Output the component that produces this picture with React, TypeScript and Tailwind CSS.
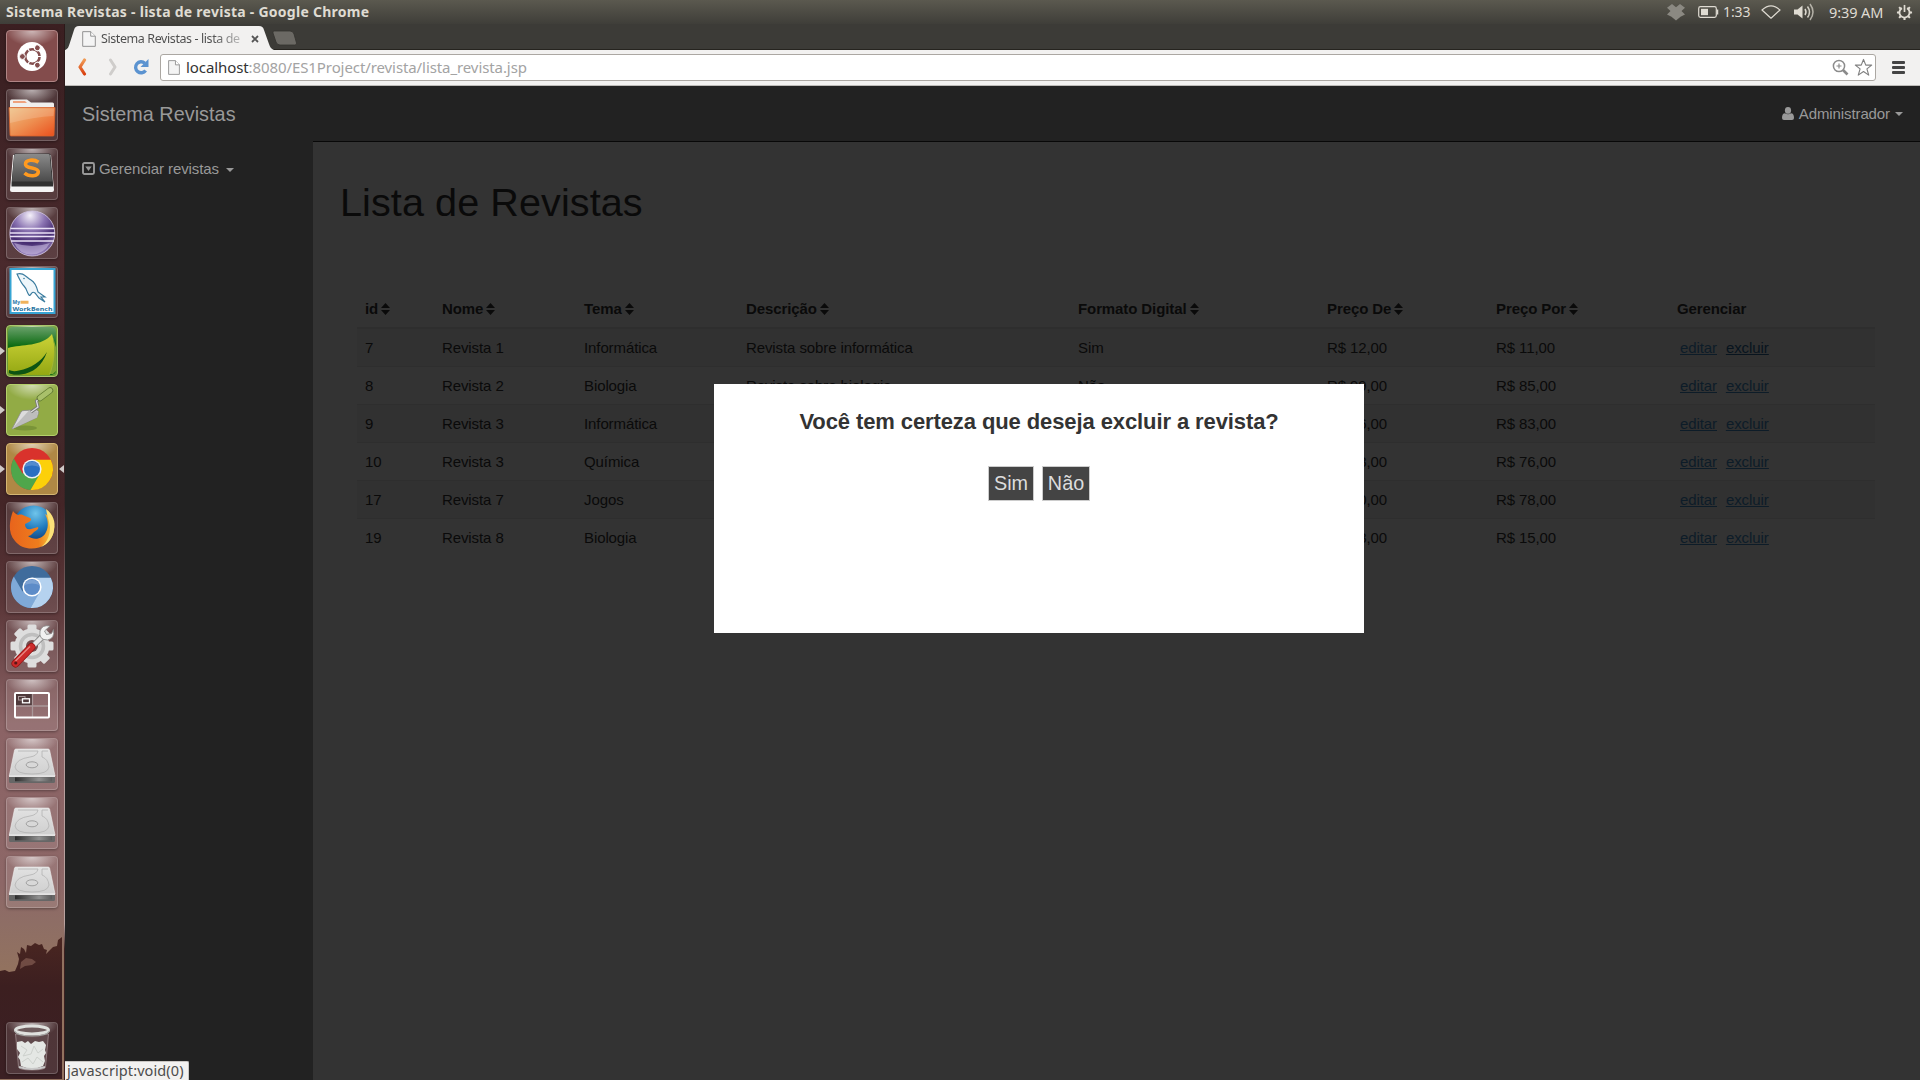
import React from "react";

const ui = "font-['Noto_Sans','Open_Sans',sans-serif]";

function Tile({ children, tone = "glass", left, right }: { children: React.ReactNode; tone?: string; left?: boolean; right?: boolean }) {
  const tones: Record<string, string> = {
    glass: "border-white/20 bg-white/10",
    ubuntu: "border-[#b08585] bg-[#834c4c]",
    leaf: "border-[#a9c76c] bg-[#6d9a35]",
    olive: "border-[#b4d06a] bg-[#92ab45]",
    gold: "border-[#d5b673] bg-[#af8845]",
  };
  return (
    <div className="flex h-[52px] w-full shrink-0 items-center">
      <div className="flex w-[6px] shrink-0">
        {left && <div className="h-0 w-0 border-y-4 border-l-[5px] border-y-transparent border-l-[#cfc9c8]" />}
      </div>
      <div className={"relative h-[52px] w-[52px] shrink-0 overflow-hidden rounded-[4px] border shadow-[0_1px_3px_rgba(0,0,0,0.35)] " + tones[tone]}>
        <div className="absolute inset-0 bg-[radial-gradient(ellipse_26px_15px_at_50%_0%,rgba(255,255,255,0.6),rgba(255,255,255,0))]" />
        <svg viewBox="0 0 52 52" className="absolute -left-px -top-px h-[52px] w-[52px]">
          {children}
        </svg>
      </div>
      <div className="flex w-[6px] shrink-0 justify-end">
        {right && <div className="h-0 w-0 border-y-4 border-r-[5px] border-y-transparent border-r-[#cfc9c8]" />}
      </div>
    </div>
  );
}

const Ubuntu = () => (
  <g>
    <circle cx="26" cy="26.5" r="14.5" fill="#fff" />
    <circle cx="26.4" cy="26.5" r="7.2" fill="none" stroke="#844e4e" strokeWidth="2.6" />
    {[60, 180, 300].map((a) => (
      <g key={a} transform={`rotate(${a} 26.4 26.5)`}>
        <circle cx="36.4" cy="26.5" r="2.9" fill="#844e4e" stroke="#fff" strokeWidth="1" />
      </g>
    ))}
    {[0, 120, 240].map((a) => (
      <path key={a} d="M32 26.5h4" stroke="#fff" strokeWidth="1.2" transform={`rotate(${a} 26.4 26.5)`} />
    ))}
  </g>
);

const Folder = () => (
  <g>
    <defs>
      <linearGradient id="fo" x1="0" y1="0" x2="1" y2="1">
        <stop offset="0" stopColor="#eec083" /><stop offset=".5" stopColor="#ee8e50" /><stop offset="1" stopColor="#ea4f1c" />
      </linearGradient>
    </defs>
    <path d="M4 19V12q0-1.500 1.500-1.500H21l4 3h21.500q1.500 0 1.500 1.500v4z" fill="#f0efed" />
    <path d="M7 12h12l2 2H7z" fill="#efa27d" />
    <path d="M3 18.500h46l-1 27.500q0 1-1 1H5q-1 0-1-1z" fill="url(#fo)" stroke="#d9632c" strokeWidth=".8" />
    <path d="M4 19.500h44L47.500 27Q28 28 4 34z" fill="#fff" opacity=".16" />
  </g>
);

const Sublime = () => (
  <g>
    <defs><linearGradient id="su" x1="0" y1="0" x2="0" y2="1"><stop offset="0" stopColor="#8a8a8a" /><stop offset="1" stopColor="#4b4b4b" /></linearGradient></defs>
    <path d="M7 7h38l3 35q0 2-2 2H6q-2 0-2-2z" fill="#f4f4f4" />
    <path d="M9 5.500h34q1.500 0 1.500 1.500L47 35v3.500H5.500V35L8 7q0-1.500 1-1.500z" fill="#303030" />
    <path d="M9.500 6h33q1 0 1.200 1L46 33.500H6L8.300 7q.2-1 1.200-1z" fill="url(#su)" />
    <path d="M32.500 14.200C28 11 19.500 11.500 19.500 16.200c0 5 12.800 2.800 12.800 7.600 0 5-9.500 5-13.800 1.200" fill="none" stroke="#ff9a1f" strokeWidth="3.600" />
  </g>
);

const Eclipse = () => (
  <g>
    <defs><radialGradient id="ec" cx=".45" cy=".1" r=".95"><stop offset="0" stopColor="#f5f1fa" /><stop offset=".35" stopColor="#8b74b2" /><stop offset=".65" stopColor="#452b70" /><stop offset="1" stopColor="#a894cc" /></radialGradient></defs>
    <circle cx="26.300" cy="26.500" r="22.500" fill="url(#ec)" stroke="#d3c8e4" strokeWidth=".8" />
    <path d="M4.500 21.500h44M4 26h45M4 29.500h45M5 34h43" stroke="#e9e1f5" strokeWidth="1.400" />
    <path d="M8 36q18 6 36 0q-6 11-18 11.500T8 36z" fill="#cfc2e6" opacity=".55" />
  </g>
);

const Workbench = () => (
  <g>
    <rect x="4.500" y="3" width="44" height="44" fill="#fff" stroke="#37a5d4" strokeWidth="2" />
    <path d="M11 8c6-2 9 3 14 6 5 3 6 8 7 12l7 5-4 0 4 5-6-4-4-5c-4-3-4 4-6 2s-2-6-5-9-5-8-7-12z" fill="#eef6fa" stroke="#3b7c9f" strokeWidth="1.200" />
    <circle cx="18" cy="12.500" r=".8" fill="#3b7c9f" />
    <g fontWeight="bold" fontFamily="Noto Sans">
      <text x="6.500" y="38" fontSize="5" fill="#2676a8">My</text>
      <path d="M14.500 36.300h8" stroke="#f0b35c" strokeWidth="3" />
      <text x="6.500" y="45" fontSize="5.500" textLength="40" lengthAdjust="spacingAndGlyphs" fill="#1c719e">WorkBench</text>
    </g>
  </g>
);

const Leaf = () => (
  <g>
    <defs>
      <linearGradient id="le" x1="0" y1="0" x2="0" y2="1"><stop offset="0" stopColor="#68a069" /><stop offset=".4" stopColor="#0c6b12" /></linearGradient>
      <linearGradient id="lf" x1="0" y1="0" x2="0" y2="1"><stop offset="0" stopColor="#cdd338" /><stop offset="1" stopColor="#93a712" /></linearGradient>
    </defs>
    <rect x="2" y="2" width="48" height="48" rx="5" fill="url(#le)" />
    <path d="M2 23c14-4 34-1 44-14 4 13 3 29-2 41H7c-3 0-5-2-5-5z" fill="url(#lf)" />
    <path d="M3 45q4 2 10 .5C25 43 35 37 41 27c-5 14-14 21-26 22.500Q6 50.500 3 48z" fill="#0d5413" />
    <path d="M46 9c4 14 2 28-3 40h4l3-3V22z" fill="#a2b43a" opacity=".8" />
  </g>
);

const Trowel = () => (
  <g>
    <ellipse cx="19" cy="44" rx="12" ry="2.500" fill="#4d6920" opacity=".35" />
    <path d="M6 45l9-17q1-1.500 3-1.500l13-.5q2 1 1.500 3L31 33.500z" fill="#dcdcdc" stroke="#8b8b8b" strokeWidth=".8" />
    <path d="M6 45l17-18.500 9 1L31 33.500z" fill="#bdbdbd" />
    <path d="M25 28l7-5-1.500-6 5-4" fill="none" stroke="#777" strokeWidth="3" />
    <path d="M25 28l7-5-1.500-6 5-4" fill="none" stroke="#dcdcdc" strokeWidth="1.300" />
    <path d="M34 14L44 6.500" stroke="#627b31" strokeWidth="6.500" strokeLinecap="round" />
    <path d="M34 14L44 6.500" stroke="#a9c06a" strokeWidth="4.800" strokeLinecap="round" />
  </g>
);

const Chrome = ({ c }: { c: string[] }) => (
  <g>
    <circle cx="26" cy="26" r="21" fill={c[0]} />
    <path d="M7.800 15.500A21 21 0 0 0 24.500 47L34 32 26 26 16.500 30.500z" fill={c[1]} />
    <path d="M24.500 47A21 21 0 0 0 44.800 16.800H26L35 29z" fill={c[2]} />
    <circle cx="26" cy="26" r="9.600" fill={c[4]} />
    <circle cx="26" cy="26" r="8" fill={c[3]} />
    <path d="M18.500 24a8 8 0 0 1 15 0q-7.500-3-15 0z" fill="#fff" opacity=".2" />
  </g>
);

const Firefox = () => (
  <g>
    <defs>
      <radialGradient id="fb" cx=".55" cy=".2" r=".8"><stop offset="0" stopColor="#6fc4ea" /><stop offset=".5" stopColor="#1e79bd" /><stop offset="1" stopColor="#0d2c62" /></radialGradient>
      <linearGradient id="fx" x1="0" y1="0" x2="1" y2="0"><stop offset="0" stopColor="#e8641c" /><stop offset=".65" stopColor="#ee7d1d" /><stop offset="1" stopColor="#f9d443" /></linearGradient>
    </defs>
    <circle cx="27.500" cy="23.500" r="20" fill="url(#fb)" />
    <path d="M7 9c1 1 2 3 5 4 3-1 5 0 7 1l5 2c2 1 1 3-1 4l-4 2c0 4 2 6 6 5l7-2c1 2-1 3-4 5-3 3-4 4-6 4 6 5 15 3 18-4 3-5 2-13-1-18 6 3 7 4 8 6 3 9 0 18-7 24-10 7-24 6-31-3C1 30 4 17 7 9z" fill="url(#fx)" />
    <path d="M40 7c7 5 10 13 8 21-1 8-6 14-13 17 7-5 9-13 9-20-1-7-3-11-4-18z" fill="#fbe27a" />
  </g>
);

const Tools = () => (
  <g>
    {[0, 45, 90, 135].map((a) => (
      <rect key={a} x="21.500" y="4.500" width="9" height="43" rx="1.500" fill="#dedede" transform={`rotate(${a} 26 26)`} />
    ))}
    <circle cx="26" cy="26" r="17.500" fill="#dedede" />
    <circle cx="26" cy="26" r="11.500" fill="none" stroke="#bfbfbf" strokeWidth="3.500" />
    <circle cx="26" cy="26" r="6" fill="#734d4f" />
    <path d="M25 28l12-12" stroke="#7b7b7b" strokeWidth="6" />
    <path d="M25 28l12-12" stroke="#e7e7e7" strokeWidth="4.500" />
    <path d="M44 6l-5.500 5 2 3.500 5-1 2-4q1.500 9-6 10.500-9 0-7.500-9Q36 4.500 44 6z" fill="#f1f1f1" stroke="#858585" strokeWidth=".8" />
    <path d="M9.500 43.500L25.500 27" stroke="#8e1212" strokeWidth="8" strokeLinecap="round" />
    <path d="M9.500 43.500L25.500 27" stroke="#cc2b2b" strokeWidth="6.500" strokeLinecap="round" />
    <path d="M9.500 41L24 26.500" stroke="#e98a85" strokeWidth="1.200" />
    <circle cx="9.800" cy="43" r="1.600" fill="#5b1515" />
  </g>
);

const Workspaces = () => (
  <g fill="none">
    <rect x="9" y="14.500" width="17" height="12" fill="#4f3a3b" />
    <path d="M9 27h34M26.500 15v24" stroke="#a99899" strokeWidth="1.300" />
    <rect x="9" y="14" width="34" height="24.500" rx="1" stroke="#fff" strokeWidth="2" />
    <rect x="12.500" y="17.500" width="6.500" height="3.500" stroke="#a99899" />
    <rect x="16.500" y="19.800" width="7" height="4" stroke="#fff" strokeWidth="1.300" fill="#4f3a3b" />
  </g>
);

const Disk = () => (
  <g>
    <defs>
      <linearGradient id="dk" x1="0" y1="0" x2="0" y2="1"><stop offset="0" stopColor="#e2e2e2" /><stop offset="1" stopColor="#cfcfcf" /></linearGradient>
      <linearGradient id="df" x1="0" y1="0" x2="1" y2="0"><stop offset="0" stopColor="#2c2c2c" /><stop offset=".65" stopColor="#919191" /><stop offset="1" stopColor="#5a5a5a" /></linearGradient>
    </defs>
    <path d="M10 11h32q1.300 0 1.600 1.200L49 38H3.300L8.500 12.200Q8.800 11 10 11z" fill="url(#dk)" stroke="#f0f0f0" strokeWidth=".6" />
    <path d="M12 13h20q-1 5-8 6-14 2-15 10 1 7 17 7t17-7q-1-8-7-10V13h6" fill="none" stroke="#b2b2b2" strokeWidth=".8" />
    <ellipse cx="26" cy="26.800" rx="5.800" ry="3" fill="#d8d8d8" stroke="#999" strokeWidth=".9" />
    <path d="M3 38.300h46v5.200q0 1.500-1.500 1.500h-43Q3 45 3 43.500z" fill="#666" />
    <rect x="9" y="39.300" width="37" height="4" fill="url(#df)" />
    <path d="M3 38.300h46" stroke="#fff" strokeWidth="1" />
  </g>
);

const Trash = () => (
  <g>
    <path d="M9.500 12l3 33q.5 3 13.500 3t13.500-3l3-33z" fill="#fff" fillOpacity=".1" stroke="#cbbcbd" strokeOpacity=".6" strokeWidth=".8" />
    <path d="M11 20l5-1 3 2 3-2 3 3 4-3 4 1 4-1 3 4-1 5 1 3-2 3 1 5-2 5q-11 5-22 0l-1-6-2-3 2-4-3-4z" fill="#e4e7e4" />
    <path d="M15 24l6 4-4 6 8-2 3-8 4 7 5-4M16 40l6-4 5 6 4-7 6 5" stroke="#cdd1cd" strokeWidth="1" fill="none" />
    <path d="M13 45q13 4 26 0" stroke="#c9c9c9" strokeWidth="2" fill="none" />
    <ellipse cx="26" cy="8" rx="16.500" ry="4" fill="#6e5c5d" stroke="#dfe1de" strokeWidth="3" />
    <path d="M8.500 9q3 5 17.500 5t17.500-5" fill="none" stroke="#a6a8a5" strokeWidth="1.200" />
  </g>
);

function Launcher() {
  return (
    <aside className="relative flex w-[65px] shrink-0 flex-col bg-[linear-gradient(180deg,#3b1f21_0px,#3c2123_60px,#4a2a2d_240px,#42272a_330px,#43282a_400px,#442527_480px,#5b3739_580px,#8b6365_700px,#8d6767_860px,#8e6e65_900px,#92725f_945px,#92725f_1056px)]">
      <svg viewBox="0 0 65 180" className="absolute bottom-0 left-0 h-[180px] w-[65px]">
        <defs><linearGradient id="tr" x1="0" y1="0" x2="0" y2="1"><stop offset="0" stopColor="#4a2621" /><stop offset=".35" stopColor="#3c1f20" /><stop offset="1" stopColor="#3b2024" /></linearGradient></defs>
        <path d="M0 71l5-1 4 2 6-1 3-7 1-5-2-7 3 2 1-7 3 2 2 4 1-8 4 1 4-3 4 2 3-1 2 5 3 1-1 4 3-3 4-4 4-1 1-6 4-3v142H0z" fill="url(#tr)" />
        <path d="M21 62l5-4 6 1 4 3-4 3-7 1-5 3z" fill="#835d52" opacity=".7" />
      </svg>
      <div className="absolute right-0 top-0 h-full w-px bg-[linear-gradient(180deg,#2b1919_0px,#3a2425_480px,#b59b9b_650px,#b9a3a0_900px,#3b2020_925px)]" />
      <div className="relative flex h-full w-full flex-col gap-[7px] pb-[6px] pt-[6px]">
        <Tile tone="ubuntu"><Ubuntu /></Tile>
        <Tile><Folder /></Tile>
        <Tile><Sublime /></Tile>
        <Tile><Eclipse /></Tile>
        <Tile><Workbench /></Tile>
        <Tile tone="leaf" left><Leaf /></Tile>
        <Tile tone="olive" left><Trowel /></Tile>
        <Tile tone="gold" left right><Chrome c={["#d9322c", "#4fa64b", "#fcd00a", "#2a6fc2", "#f1f1f1"]} /></Tile>
        <Tile><Firefox /></Tile>
        <Tile><Chrome c={["#3f6c9c", "#7fa9d8", "#b5d2ef", "#5d8cc8", "#fff"]} /></Tile>
        <Tile><Tools /></Tile>
        <Tile><Workspaces /></Tile>
        <Tile><Disk /></Tile>
        <Tile><Disk /></Tile>
        <Tile><Disk /></Tile>
        <div className="flex-1" />
        <Tile><Trash /></Tile>
      </div>
    </aside>
  );
}

function SystemBar() {
  return (
    <header className={"flex h-6 shrink-0 items-center bg-gradient-to-b from-[#5b594f] to-[#3f3e39] text-[#dfdbd2] " + ui}>
      <span className="ml-[6px] whitespace-nowrap text-[14px] font-bold leading-6 tracking-[0.260px]">Sistema Revistas - lista de revista - Google Chrome</span>
      <svg viewBox="0 0 18 17" className="ml-auto mr-[13px] h-[17px] w-[18px] fill-[#8b8982]">
        <path d="M5 0l4 3.300L13 0l5 3.700L14.500 7 18 10.500l-4.500 2.300L9 16.500l-4.500-3.700L0 10.500 3.500 7 0 3.700z" />
      </svg>
      <svg viewBox="0 0 21 12" className="mr-1 h-3 w-[21px]">
        <rect x=".7" y=".7" width="17.600" height="10.600" rx="1.800" fill="none" stroke="#dfdbd2" strokeWidth="1.200" />
        <rect x="3" y="2.800" width="7" height="6.400" fill="#dfdbd2" />
        <path d="M19.500 3.500v5" stroke="#dfdbd2" strokeWidth="1.500" />
      </svg>
      <span className="w-[27px] whitespace-nowrap text-[14px] leading-6 tracking-[-0.100px]">1:33</span>
      <svg viewBox="0 0 20 14" className="ml-[11px] h-[14px] w-5">
        <path d="M1 5Q10-3.200 19 5L10 13.200z" fill="none" stroke="#dfdbd2" strokeWidth="1.200" strokeLinejoin="round" />
      </svg>
      <svg viewBox="0 0 20 18" className="ml-[13px] h-[18px] w-5" fill="none" stroke="#dfdbd2" strokeWidth="1.500">
        <path d="M0 6.500h3.500L8.500 2.500v13L3.500 11.500H0z" fill="#dfdbd2" stroke="none" />
        <path d="M11 6q2 3 0 6" /><path d="M13.500 3.500q4 5.500 0 11" opacity=".9" /><path d="M16 1q6 8 0 16" opacity=".7" />
      </svg>
      <span className="ml-[15px] w-[55px] whitespace-nowrap text-[14.500px] leading-[22px] tracking-[-0.100px]">9:39 AM</span>
      <svg viewBox="0 0 18 18" className="ml-[12px] mr-[7px] h-[17px] w-[17px]" fill="none" stroke="#dfdbd2">
        <path d="M6.300 4.300a5.400 5.400 0 1 0 5.400 0" strokeWidth="2" />
        <path d="M9 1v7.500" strokeWidth="1.800" />
        <path d="M1 9h2.500M14.500 9H17M9 14.500V17M3.300 3.300l1.900 1.900M14.700 3.300l-1.900 1.900M3.300 14.700l1.900-1.900M14.700 14.700l-1.900-1.900" strokeWidth="2.200" />
      </svg>
    </header>
  );
}

const PageIcon = ({ className }: { className: string }) => (
  <svg viewBox="0 0 14 17" className={className} preserveAspectRatio="none">
    <path d="M.7.700h8L13.300 5.500v10.800H.7z" fill="#f4f4f4" stroke="#8e8e8e" strokeWidth="1" />
    <path d="M8.700.700v4.800h4.600" fill="#fff" stroke="#8e8e8e" strokeWidth="1" />
  </svg>
);

function TabStrip() {
  return (
    <div className={"flex h-[26px] shrink-0 border-b border-[#26241f] bg-[#3c3b37] " + ui}>
      <div className="relative -mb-px h-[26px] w-[210px] shrink-0">
        <svg viewBox="0 0 210 26" className="absolute inset-0 h-[26px] w-[210px]">
          <path d="M0 26c3-1 3.500-3 4.500-6L9 6c1-3 2-4 5-4h180c3 0 4 1 5 4l5 14c1 3 2 5 5 6z" fill="#f2f1f0" />
        </svg>
        <div className="relative flex h-full items-center pl-[17px] pt-[4px]">
          <PageIcon className="h-4 w-[14px]" />
          <span className="ml-[5px] w-[139px] overflow-hidden whitespace-nowrap bg-[linear-gradient(90deg,#4c4c4c_80%,#b8b8b8)] bg-clip-text text-[12.500px] leading-[18px] tracking-[-0.410px] text-transparent">Sistema Revistas - lista de</span>
          <svg viewBox="0 0 8 8" className="ml-[11px] h-2 w-2"><path d="M1 1l6 6M7 1L1 7" stroke="#555" strokeWidth="1.800" /></svg>
        </div>
      </div>
      <svg viewBox="0 0 26 16" className="-ml-[3px] mt-[6px] h-4 w-[26px]">
        <path d="M2 1h16q3 0 4 3l2.500 9q.5 2-2 2H8q-3 0-4-3L1 3Q.500 1 2 1z" fill="#6b6964" stroke="#33322e" strokeWidth=".8" />
      </svg>
    </div>
  );
}

function Toolbar() {
  return (
    <div className={"flex h-9 shrink-0 items-center border-b border-[#bdbbb8] bg-[#f2f1f0] pb-px " + ui}>
      <svg viewBox="0 0 10 18" className="ml-3 h-[18px] w-[10px]">
        <defs><linearGradient id="bk" x1="0" y1="0" x2="0" y2="1"><stop offset="0" stopColor="#f09a55" /><stop offset="1" stopColor="#d9400f" /></linearGradient></defs>
        <path d="M7.500 2L3 9l4.500 7" fill="none" stroke="url(#bk)" strokeWidth="3.200" strokeLinecap="round" strokeLinejoin="round" />
      </svg>
      <svg viewBox="0 0 10 18" className="ml-[21px] h-[18px] w-[10px]">
        <path d="M2.500 2L7 9l-4.500 7" fill="none" stroke="#cfcdcb" strokeWidth="3" strokeLinecap="round" strokeLinejoin="round" />
      </svg>
      <svg viewBox="0 0 16 18" className="ml-[15px] h-[18px] w-4">
        <path d="M12.600 12.500a5.500 5.500 0 1 1-.8-7.300" fill="none" stroke="#5b93d0" strokeWidth="3.400" />
        <path d="M15.500 1v8H7.500z" fill="#5b93d0" />
      </svg>
      <div className="ml-[11px] flex h-[27px] flex-1 items-center rounded-[3px] border border-[#aba7a2] bg-white">
        <PageIcon className="ml-[7px] h-[15px] w-[12px]" />
        <span className="ml-[6px] whitespace-nowrap text-[15px] leading-[22px] tracking-[-0.090px] text-[#a3a3a3]"><span className="text-[#333]">localhost</span>:8080/ES1Project/revista/lista_revista.jsp</span>
        <svg viewBox="0 0 17 17" className="ml-auto h-[17px] w-[17px]" fill="none" stroke="#8b8b8b">
          <circle cx="7" cy="7" r="5.600" strokeWidth="1.500" /><path d="M4.500 7h5M7 4.500v5" strokeWidth="1.200" /><path d="M11 11l4.500 4.500" strokeWidth="2.600" />
        </svg>
        <svg viewBox="0 0 20 20" className="ml-[5px] mr-[2px] h-[19px] w-[19px]">
          <path d="M10 1.500l2.400 6h6.200l-5 4 1.900 6.500L10 14.300 4.500 18l1.900-6.500-5-4h6.200z" fill="#fff" stroke="#808080" strokeWidth="1.200" strokeLinejoin="round" />
        </svg>
      </div>
      <div className="ml-4 mr-[15px] flex w-[13px] flex-col gap-[2px]">
        <div className="h-[3px] rounded-[1px] bg-[#444]" /><div className="h-[3px] rounded-[1px] bg-[#444]" /><div className="h-[3px] rounded-[1px] bg-[#444]" />
      </div>
    </div>
  );
}

const Caret = () => <span className="inline-block h-0 w-0 border-x-4 border-t-4 border-x-transparent border-t-[#999]" />;

const Sort = () => (
  <svg viewBox="0 0 9 12" className="ml-[3px] inline-block h-[12px] w-[9px] -translate-y-px fill-[#0a0a0a]">
    <path d="M4.500 0L9 5H0zM4.500 12L9 7H0z" />
  </svg>
);

const columns = ["id", "Nome", "Tema", "Descrição", "Formato Digital", "Preço De", "Preço Por"];
const rows = [
  ["7", "Revista 1", "Informática", "Revista sobre informática", "Sim", "R$ 12,00", "R$ 11,00"],
  ["8", "Revista 2", "Biologia", "Revista sobre biologia", "Não", "R$ 99,00", "R$ 85,00"],
  ["9", "Revista 3", "Informática", "", "", "R$ 86,00", "R$ 83,00"],
  ["10", "Revista 3", "Química", "", "", "R$ 88,00", "R$ 76,00"],
  ["17", "Revista 7", "Jogos", "", "", "R$ 80,00", "R$ 78,00"],
  ["19", "Revista 8", "Biologia", "", "", "R$ 18,00", "R$ 15,00"],
];

const gridCols = "grid grid-cols-[77px_142px_162px_332px_249px_169px_181px_1fr]";

function PageBody() {
  return (
    <div className="flex min-h-0 flex-1 flex-col bg-[#222] font-['Liberation_Sans',Arial,sans-serif] text-[15px] tracking-[-0.100px]">
      <nav className="flex h-[55px] shrink-0 items-center justify-between pl-[17px] pr-[17px] text-[#999]">
        <span className="pt-px text-[19.8px] leading-[21px] tracking-[0.050px]">Sistema Revistas</span>
        <div className="flex items-center leading-none">
          <svg viewBox="0 0 12 13" className="mr-[5px] h-[13px] w-[12px] fill-[#999]">
            <ellipse cx="6" cy="3.400" rx="3.100" ry="3.400" /><path d="M0 11c0-3 1-4.800 3-4.800q3 2.300 6 0c2 0 3 1.800 3 4.800q0 2-2 2H2q-2 0-2-2z" />
          </svg>
          Administrador<span className="ml-[5px] flex"><Caret /></span>
        </div>
      </nav>
      <div className="flex min-h-0 flex-1">
        <div className="flex w-[248px] shrink-0 items-start pl-[17px] pt-5 leading-none text-[#999]">
          <svg viewBox="0 0 13 13" className="mr-1 mt-[1px] h-[13px] w-[13px]">
            <rect x="1" y="1" width="11" height="11" rx="1.500" fill="none" stroke="#999" strokeWidth="1.900" />
            <path d="M3.300 4.500h6.400L6.500 9z" fill="#999" />
          </svg>
          Gerenciar revistas<span className="ml-[7px] mt-[7px] flex"><Caret /></span>
        </div>
        <main className="flex-1 border-t border-[#080808] bg-[#333] text-[#0a0a0a]">
          <h1 className="ml-[27px] mt-[38px] text-[39.6px] leading-[44px] tracking-[0.080px]">Lista de Revistas</h1>
          <div className="ml-[44px] mt-[66px] w-[1518px]">
            <div className={gridCols + " h-[39px] items-center border-b-2 border-[#2e2e2e] pt-px font-bold"}>
              {columns.map((c) => (
                <div key={c} className="whitespace-nowrap pl-2">{c}<Sort /></div>
              ))}
              <div className="pl-2">Gerenciar</div>
            </div>
            {rows.map((r, i) => (
              <div key={i} className={gridCols + " h-[38px] items-center border-b border-[#2e2e2e] pt-[2px] last:border-[#333] odd:bg-[#333] even:bg-[#313131]"}>
                {r.map((v, j) => (
                  <div key={j} className="whitespace-nowrap pl-2">{v}</div>
                ))}
                <div className="flex gap-[9px] pl-[11px] text-[#0d1c28] underline">
                  <a>editar</a>
                  <a className={i === 0 ? "text-[#08141e]" : ""}>excluir</a>
                </div>
              </div>
            ))}
          </div>
        </main>
      </div>
    </div>
  );
}

function Dialog() {
  return (
    <div className="absolute left-[714px] top-[384px] flex h-[249px] w-[650px] flex-col items-center bg-white font-['Liberation_Sans',Arial,sans-serif]">
      <h2 className="mt-[25px] whitespace-nowrap text-[22px] font-bold leading-[26px] tracking-[-0.100px] text-[#333]">Você tem certeza que deseja excluir a revista?</h2>
      <div className="mt-[31px] flex gap-2 text-[19.8px] text-[#ddd]">
        <button className="h-[35px] w-[46px] border border-[#ccc] bg-[#444] leading-[33px]">Sim</button>
        <button className="h-[35px] w-[48px] border border-[#ccc] bg-[#444] leading-[33px]">Não</button>
      </div>
    </div>
  );
}

export default function App() {
  return (
    <div className="relative flex h-[1080px] w-[1920px] flex-col overflow-hidden">
      <SystemBar />
      <div className="flex min-h-0 flex-1">
        <Launcher />
        <div className="flex min-w-0 flex-1 flex-col">
          <TabStrip />
          <Toolbar />
          <PageBody />
        </div>
      </div>
      <Dialog />
      <div className={"absolute bottom-0 left-[65px] h-[19px] w-[124px] whitespace-nowrap rounded-tr-[2px] border-r border-t border-[#c9c6c3] bg-[#f2f1f0] pl-[2px] text-[14.500px] leading-[17px] tracking-[0.100px] text-[#4c4c4c] " + ui}>javascript:void(0)</div>
    </div>
  );
}
